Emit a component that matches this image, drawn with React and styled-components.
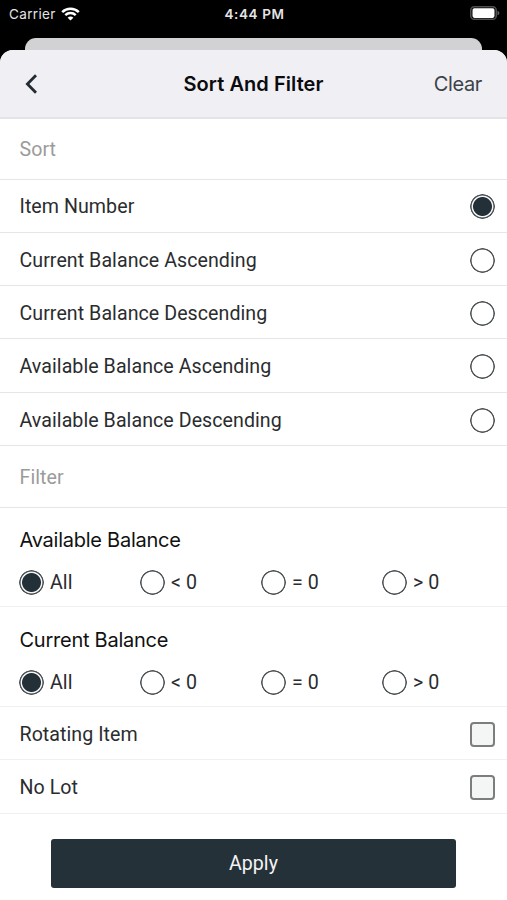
import React, { useState } from "react";
import styled, { createGlobalStyle } from "styled-components";

const GlobalStyle = createGlobalStyle`
  * { box-sizing: border-box; }
  body { margin: 0; background: #000; }
`;

const Screen = styled.main`
  width: 507px;
  height: 900px;
  display: flex;
  flex-direction: column;
  background: #000;
  overflow: hidden;
  font-family: Roboto, sans-serif;
  font-size: 19.6px;
  letter-spacing: 0.06px;
  color: #2a2c2e;
`;

const StatusBar = styled.div`
  height: 38px;
  flex: none;
  display: grid;
  grid-template-columns: 1fr auto 1fr;
  align-items: start;
  padding: 6px 7px 0 9px;
  color: #e4e4e4;
  font: 400 13.5px/16px Inter, sans-serif;
`;

const Carrier = styled.div`
  display: flex;
  align-items: center;
  gap: 5px;
  letter-spacing: 0.35px;
`;

const Clock = styled.div`
  font-weight: 600;
  font-size: 13.5px;
  letter-spacing: 0.6px;
`;

const BatteryIcon = styled.svg`
  justify-self: end;
`;

const BackSheet = styled.div`
  height: 12px;
  flex: none;
  margin: 0 25px;
  border-radius: 11px 11px 0 0;
  background: #d2d2d4;
`;

const Sheet = styled.section`
  flex: 1;
  display: flex;
  flex-direction: column;
  border-radius: 13px 13px 0 0;
  background: #fff;
  overflow: hidden;
`;

const Header = styled.header`
  height: 69px;
  flex: none;
  display: grid;
  grid-template-columns: 1fr auto 1fr;
  align-items: center;
  padding: 0 25px;
  background: #efeff4;
  border-bottom: 2px solid #e4e4e7;
  font-family: Inter, sans-serif;
`;

const HeaderButton = styled.button`
  display: flex;
  justify-self: ${(p) => p.$side};
  padding: 0;
  border: 0;
  background: none;
  color: #3b4247;
  font: 400 20px/24px Inter, sans-serif;
  letter-spacing: -0.35px;
`;

const Title = styled.h1`
  margin: 0;
  color: #0b0b0d;
  font-size: 20px;
  font-weight: 600;
  line-height: 24px;
  letter-spacing: 0.06px;
`;

const SectionTitle = styled.h2`
  height: ${(p) => p.$height}px;
  flex: none;
  display: flex;
  align-items: center;
  margin: 0;
  padding: 1px 0 0 19.5px;
  border-bottom: 1px solid #e6e6e6;
  color: #9b9b9b;
  font-size: 19.6px;
  font-weight: 400;
`;

const OptionRow = styled.label`
  height: ${(p) => p.$height}px;
  flex: none;
  display: flex;
  align-items: center;
  justify-content: space-between;
  padding: ${(p) => p.$top ?? 2}px 12px 0 19.5px;
  border-bottom: 1px solid ${(p) => (p.$faint ? "#f0f0f0" : "#e6e6e6")};
`;

const Group = styled.fieldset`
  height: ${(p) => p.$height}px;
  flex: none;
  min-width: 0;
  margin: 0;
  padding: ${(p) => p.$height - 79}px 0 0 19px;
  border: 0;
  border-bottom: 1px solid #f0f0f0;
`;

const GroupTitle = styled.div`
  padding-left: 0.5px;
  color: #111;
  font: 400 20px/24px Inter, sans-serif;
  letter-spacing: -0.25px;
`;

const Choices = styled.div`
  display: grid;
  grid-template-columns: repeat(4, 121px);
  margin-top: 18px;
`;

const Choice = styled.label`
  display: flex;
  align-items: center;
  gap: 6px;
  height: 25px;
  line-height: 25px;
`;

const Radio = styled.input.attrs({ type: "radio" })`
  appearance: none;
  flex: none;
  width: 25px;
  height: 25px;
  margin: 0;
  border-radius: 50%;
  background: radial-gradient(circle, #fff 10.5px, #4b5155 11.3px, #4b5155 12px, #fff 12.7px);

  &:checked {
    background: radial-gradient(
      circle,
      #243038 9px,
      #f4f6f6 9.9px,
      #f4f6f6 10.5px,
      #4b5155 11.3px,
      #4b5155 12px,
      #fff 12.7px
    );
  }
`;

const Checkbox = styled.input.attrs({ type: "checkbox" })`
  appearance: none;
  flex: none;
  width: 25px;
  height: 25px;
  margin: 0;
  border: 2px solid #7b7d7e;
  border-radius: 4px;
  background: #f4f6f6;

  &:checked {
    background: #243038;
  }
`;

const Footer = styled.footer`
  flex: 1;
  padding: 25px 51px 0;
`;

const ApplyButton = styled.button`
  width: 405px;
  height: 49px;
  display: block;
  padding: 1px 0 0;
  border: 0;
  border-radius: 3px;
  background: #253139;
  color: #f4f4f4;
  font: 400 19.6px/24px Roboto, sans-serif;
`;

const sorts = [
  { label: "Item Number", height: 53, top: 1 },
  { label: "Current Balance Ascending", height: 53 },
  { label: "Current Balance Descending", height: 53 },
  { label: "Available Balance Ascending", height: 54, top: 1 },
  { label: "Available Balance Descending", height: 53 },
];
const choices = ["All", "< 0", "= 0", "> 0"];

function BalanceGroup({ title, height }) {
  const [value, setValue] = useState("All");
  return (
    <Group $height={height}>
      <GroupTitle>{title}</GroupTitle>
      <Choices>
        {choices.map((c) => (
          <Choice key={c}>
            <Radio name={title} checked={value === c} onChange={() => setValue(c)} />
            {c}
          </Choice>
        ))}
      </Choices>
    </Group>
  );
}

export default function App() {
  const [sort, setSort] = useState(sorts[0].label);
  return (
    <Screen>
      <GlobalStyle />
      <StatusBar>
        <Carrier>
          Carrier
          <svg width="19" height="14" viewBox="0 0 19 14" fill="none" stroke="#fff" strokeWidth="2.5">
            <path d="M1.2 5.1C5.8.6 13.2.6 17.8 5.1" />
            <path d="M4.3 8.2c2.9-2.8 7.5-2.8 10.4 0" />
            <path d="M9.5 13.6 6.6 10.7c1.6-1.5 4.2-1.5 5.8 0z" fill="#fff" stroke="none" />
          </svg>
        </Carrier>
        <Clock>4:44 PM</Clock>
        <BatteryIcon width="30" height="15" viewBox="0 0 30 15">
          <rect x="0.75" y="0.75" width="25.5" height="12.5" rx="3.6" fill="none" stroke="#505050" strokeWidth="1.5" />
          <rect x="2.5" y="2.3" width="22" height="9.6" rx="1.8" fill="#fff" />
          <path d="M27.5 4.7c2.4.9 2.4 3.7 0 4.6z" fill="#606060" />
        </BatteryIcon>
      </StatusBar>
      <BackSheet />
      <Sheet>
        <Header>
          <HeaderButton $side="start" aria-label="Back">
            <svg width="13" height="20" viewBox="0 0 13 20" fill="none" stroke="#222b31" strokeWidth="2.8">
              <path d="M11 1.2 2.4 10l8.6 8.8" />
            </svg>
          </HeaderButton>
          <Title>Sort And Filter</Title>
          <HeaderButton $side="end">Clear</HeaderButton>
        </Header>
        <SectionTitle $height={61}>Sort</SectionTitle>
        {sorts.map(({ label, height, top }) => (
          <OptionRow key={label} $height={height} $top={top}>
            {label}
            <Radio name="sort" checked={sort === label} onChange={() => setSort(label)} />
          </OptionRow>
        ))}
        <SectionTitle $height={62}>Filter</SectionTitle>
        <BalanceGroup title="Available Balance" height={99} />
        <BalanceGroup title="Current Balance" height={100} />
        <OptionRow $faint $height={53}>
          Rotating Item
          <Checkbox />
        </OptionRow>
        <OptionRow $faint $height={54}>
          No Lot
          <Checkbox />
        </OptionRow>
        <Footer>
          <ApplyButton>Apply</ApplyButton>
        </Footer>
      </Sheet>
    </Screen>
  );
}
